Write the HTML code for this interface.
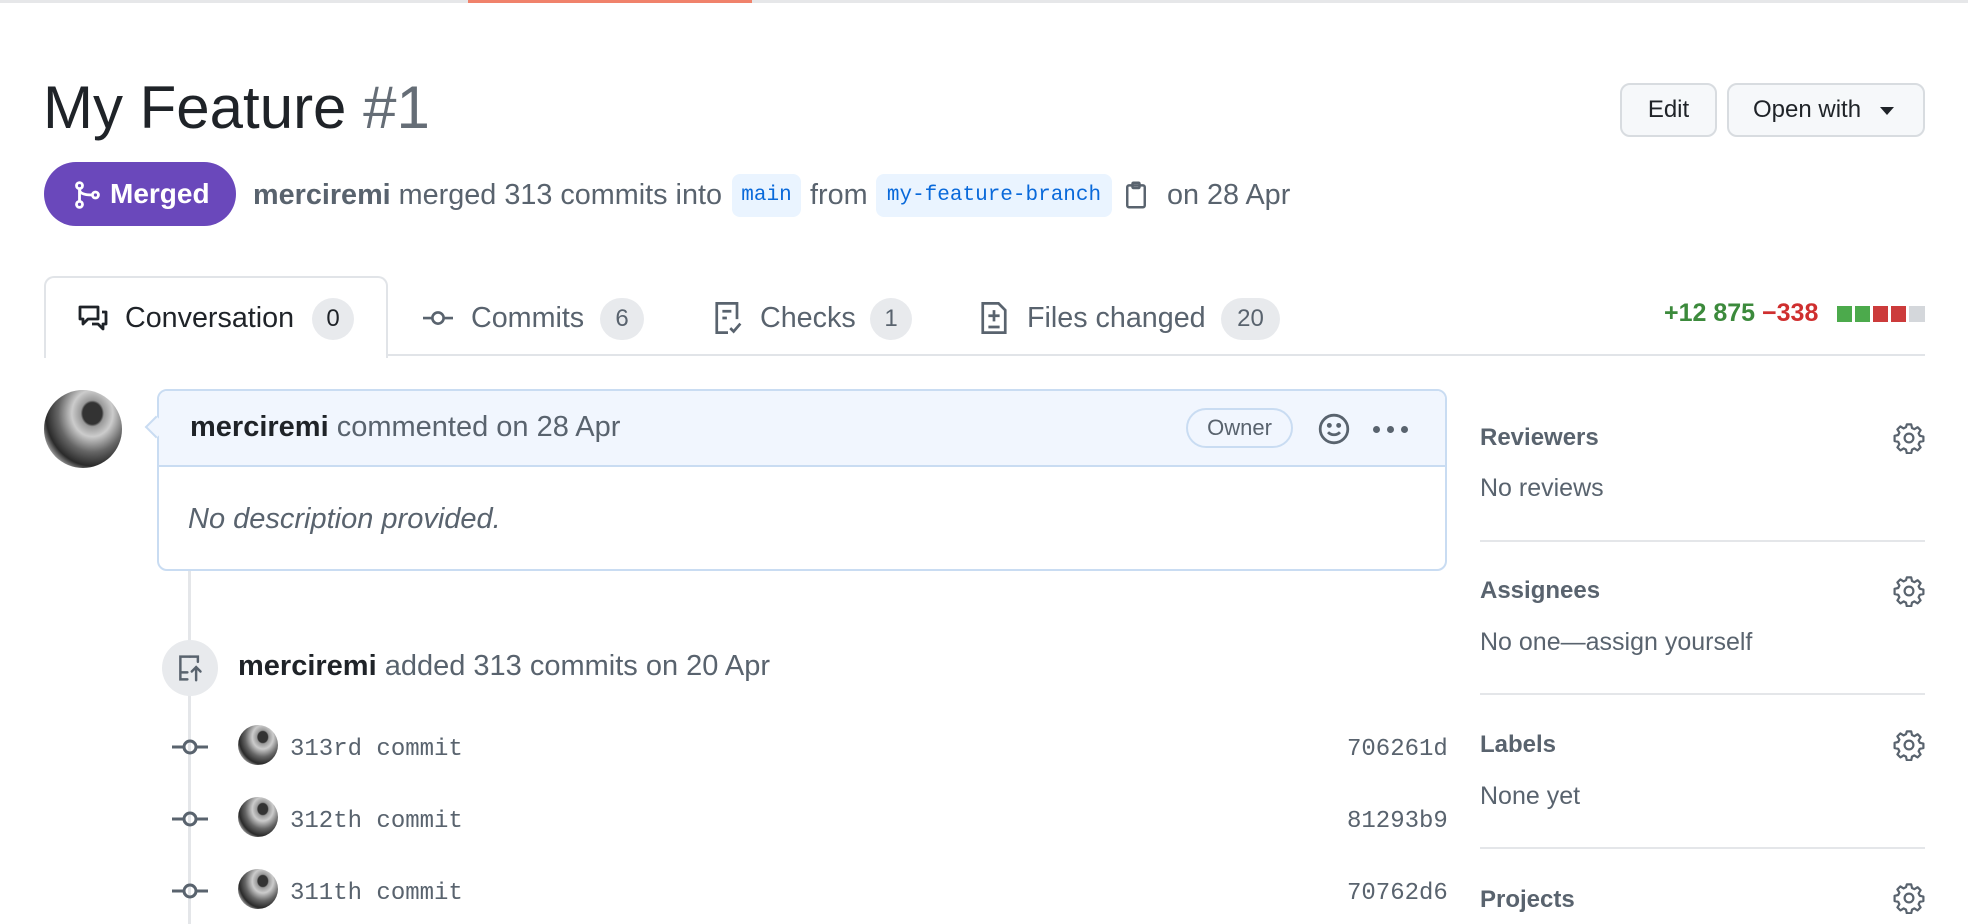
<!DOCTYPE html>
<html><head><meta charset="utf-8">
<style>
*{margin:0;padding:0;box-sizing:border-box}
body{width:1968px;height:924px;overflow:hidden;background:#fff;font-family:"Liberation Sans",sans-serif;color:#1f2328;position:relative}
.a{position:absolute;white-space:nowrap}
.mono{font-family:"Liberation Mono",monospace}
.cnt{position:absolute;background:#e8eaed;border-radius:22px;height:42px;top:298px;font-size:24px;color:#1f2328;text-align:center;line-height:42px}
.tab{position:absolute;top:302px;font-size:28.7px;color:#1f2328;line-height:32px}
.sh{position:absolute;left:1480px;font-size:24px;font-weight:bold;color:#59636e}
.sv{position:absolute;left:1480px;font-size:25px;color:#59636e}
.div{position:absolute;left:1480px;width:445px;height:2px;background:#e4e6e9}
.gear{position:absolute;left:1893px;width:32px;height:32px}
.av{border-radius:50%;background:radial-gradient(ellipse at 62% 30%,#333 0 14%,#999 17%,#ccc 30%,#666 50%,#2a2a2a 68%,#e6e6e6 85%)}
</style></head><body>
<div class="a" style="left:0;top:0;width:1968px;height:3px;background:#e6e7e9"></div>
<div class="a" style="left:468px;top:0;width:284px;height:3px;background:#f0826b"></div>

<div class="a" style="left:43px;top:70px;font-size:60px;line-height:76px;color:#1f2328">My Feature <span style="color:#656d76">#1</span></div>

<div class="a" style="left:1620px;top:83px;width:97px;height:54px;border:2px solid #d8dce0;border-radius:10px;background:#f6f8fa;font-size:24px;line-height:50px;text-align:center">Edit</div>
<div class="a" style="left:1727px;top:83px;width:198px;height:54px;border:2px solid #d8dce0;border-radius:10px;background:#f6f8fa;font-size:24px;line-height:50px;padding-left:24px">Open with <span style="display:inline-block;width:0;height:0;border-left:7px solid transparent;border-right:7px solid transparent;border-top:8px solid #1f2328;margin-left:12px;vertical-align:middle"></span></div>

<div class="a" style="left:44px;top:162px;width:192px;height:64px;border-radius:32px;background:#6a48bb;color:#fff;font-size:28px;font-weight:bold;line-height:64px;padding-left:66px">Merged</div>
<svg class="a" style="left:72px;top:180px" width="30" height="30" viewBox="0 0 16 16" fill="none" stroke="#fff" stroke-width="1.5"><circle cx="4" cy="3" r="1.6"/><circle cx="4" cy="13" r="1.6"/><circle cx="12.5" cy="8" r="1.6"/><path d="M4 4.6v6.8M4 5c0 2 2 3 6.8 3"/></svg>

<div class="a" style="left:253px;top:178px;font-size:28.8px;color:#59636e;line-height:34px"><b>merciremi</b> merged 313 commits into</div>
<div class="a mono" style="left:732px;top:174px;width:69px;height:43px;background:#eaf4ff;border-radius:8px;color:#0969da;font-size:21px;line-height:43px;text-align:center">main</div>
<div class="a" style="left:810px;top:178px;font-size:28.8px;color:#59636e;line-height:34px">from</div>
<div class="a mono" style="left:876px;top:174px;width:236px;height:43px;background:#eaf4ff;border-radius:8px;color:#0969da;font-size:21px;line-height:43px;text-align:center">my-feature-branch</div>
<svg class="a" style="left:1122px;top:180px" width="28" height="30" viewBox="0 0 16 16" fill="none" stroke="#59636e" stroke-width="1.4"><rect x="3" y="2.5" width="10" height="12.5" rx="1"/><rect x="6" y="1" width="4" height="3" rx=".5"/></svg>
<div class="a" style="left:1167px;top:178px;font-size:28.8px;color:#59636e;line-height:34px">on 28 Apr</div>

<!-- tabs -->
<div class="a" style="left:44px;top:276px;width:344px;height:82px;border:2px solid #e1e4e8;border-bottom:none;border-radius:10px 10px 0 0;background:#fff"></div>
<div class="a" style="left:387px;top:354px;width:1538px;height:2px;background:#e1e4e8"></div>
<svg class="a" style="left:76px;top:302px" width="34" height="32" viewBox="0 0 16 16" fill="none" stroke="#1f2328" stroke-width="1.4" stroke-linejoin="round"><path d="M1.5 2.5h9v6h-5l-2.5 2.5v-2.5h-1.5z"/><path d="M12.5 5h2v6h-1.5v2.5l-2.5-2.5h-3"/></svg>
<div class="tab" style="left:125px">Conversation</div>
<div class="cnt" style="left:312px;width:42px">0</div>
<svg class="a" style="left:420px;top:303px" width="36" height="30" viewBox="0 0 18 16" fill="none" stroke="#59636e" stroke-width="1.4"><circle cx="9" cy="8" r="3"/><path d="M1 8h5M12 8h5"/></svg>
<div class="tab" style="left:471px;color:#59636e">Commits</div>
<div class="cnt" style="left:600px;width:44px;color:#59636e">6</div>
<svg class="a" style="left:712px;top:300px" width="32" height="36" viewBox="0 0 14 16" fill="none" stroke="#59636e" stroke-width="1.2"><path d="M7 14.5H2V1.5h9v7"/><path d="M4.5 5h4M4.5 8h2"/><path d="M8 12.5l1.5 1.5 3-3.5"/></svg>
<div class="tab" style="left:760px;color:#59636e">Checks</div>
<div class="cnt" style="left:870px;width:42px;color:#59636e">1</div>
<svg class="a" style="left:978px;top:300px" width="32" height="36" viewBox="0 0 14 16" fill="none" stroke="#59636e" stroke-width="1.2"><path d="M2 1.5h7l3 3v10H2z"/><path d="M7 4.5v5M4.5 7h5M4.5 12h5"/></svg>
<div class="tab" style="left:1027px;color:#59636e">Files changed</div>
<div class="cnt" style="left:1221px;width:59px;color:#59636e">20</div>

<div class="a" style="left:1664px;top:298px;font-size:25px;font-weight:bold;line-height:30px"><span style="color:#3c8a3c">+12 875</span> <span style="color:#cf2f2f">−338</span></div>
<div class="a" style="left:1837px;top:306px;width:15px;height:16px;background:#4caa4c"></div>
<div class="a" style="left:1855px;top:306px;width:15px;height:16px;background:#4caa4c"></div>
<div class="a" style="left:1873px;top:306px;width:15px;height:16px;background:#cc3b3b"></div>
<div class="a" style="left:1891px;top:306px;width:15px;height:16px;background:#cc3b3b"></div>
<div class="a" style="left:1909px;top:306px;width:16px;height:16px;background:#d4d7db"></div>

<!-- comment -->
<div class="a av" style="left:44px;top:390px;width:78px;height:78px"></div>
<div class="a" style="left:188px;top:570px;width:3px;height:354px;background:#e4e6e9"></div>
<div class="a" style="left:157px;top:389px;width:1290px;height:182px;border:2px solid #c9dcf2;border-radius:10px;background:#fff"></div>
<div class="a" style="left:159px;top:391px;width:1286px;height:76px;background:#f1f6fe;border-bottom:2px solid #c9dcf2;border-radius:8px 8px 0 0"></div>
<div class="a" style="left:148px;top:419px;width:16px;height:16px;background:#f1f6fe;border-left:2px solid #c9dcf2;border-bottom:2px solid #c9dcf2;transform:rotate(45deg)"></div>
<div class="a" style="left:190px;top:410px;font-size:29px;color:#59636e;line-height:34px"><b style="color:#1f2328">merciremi</b> commented on 28 Apr</div>
<div class="a" style="left:1186px;top:408px;width:107px;height:40px;border:2px solid #c9dcf2;border-radius:20px;font-size:22px;color:#59636e;text-align:center;line-height:36px">Owner</div>
<svg class="a" style="left:1317px;top:412px" width="34" height="34" viewBox="0 0 16 16" fill="none" stroke="#59636e" stroke-width="1.3"><circle cx="8" cy="8" r="6.5"/><circle cx="5.8" cy="6.3" r=".5" fill="#59636e"/><circle cx="10.2" cy="6.3" r=".5" fill="#59636e"/><path d="M5.2 9.5c1.4 1.6 4.2 1.6 5.6 0"/></svg>
<div class="a" style="left:1373px;top:426px;width:7px;height:7px;border-radius:50%;background:#59636e"></div>
<div class="a" style="left:1387px;top:426px;width:7px;height:7px;border-radius:50%;background:#59636e"></div>
<div class="a" style="left:1401px;top:426px;width:7px;height:7px;border-radius:50%;background:#59636e"></div>
<div class="a" style="left:188px;top:502px;font-size:29px;font-style:italic;color:#59636e;line-height:34px">No description provided.</div>

<!-- push event -->
<div class="a" style="left:162px;top:640px;width:56px;height:56px;border-radius:50%;background:#e8eaed"></div>
<svg class="a" style="left:176px;top:654px" width="28" height="28" viewBox="0 0 16 16" fill="none" stroke="#59636e" stroke-width="1.4" stroke-linecap="round"><path d="M8 1.5H2.5v13h4M2.5 10.5h4"/><path d="M11.5 15V7.5M9 10l2.5-2.5L14 10"/><path d="M8 1.5h4.5v3"/></svg>
<div class="a" style="left:238px;top:649px;font-size:29px;color:#59636e;line-height:34px"><b style="color:#1f2328">merciremi</b> added 313 commits on 20 Apr</div>

<!-- commits -->
<svg class="a" style="left:172px;top:737px" width="36" height="20" viewBox="0 0 18 10" fill="none" stroke="#59636e" stroke-width="1.5"><circle cx="9" cy="5" r="3"/><path d="M0 5h6M12 5h6"/></svg>
<div class="a av" style="left:238px;top:725px;width:40px;height:40px"></div>
<div class="a mono" style="left:290px;top:735px;font-size:24px;color:#59636e;line-height:30px">313rd commit</div>
<div class="a mono" style="left:1347px;top:735px;font-size:24px;color:#59636e;line-height:30px">706261d</div>

<svg class="a" style="left:172px;top:809px" width="36" height="20" viewBox="0 0 18 10" fill="none" stroke="#59636e" stroke-width="1.5"><circle cx="9" cy="5" r="3"/><path d="M0 5h6M12 5h6"/></svg>
<div class="a av" style="left:238px;top:797px;width:40px;height:40px"></div>
<div class="a mono" style="left:290px;top:807px;font-size:24px;color:#59636e;line-height:30px">312th commit</div>
<div class="a mono" style="left:1347px;top:807px;font-size:24px;color:#59636e;line-height:30px">81293b9</div>

<svg class="a" style="left:172px;top:881px" width="36" height="20" viewBox="0 0 18 10" fill="none" stroke="#59636e" stroke-width="1.5"><circle cx="9" cy="5" r="3"/><path d="M0 5h6M12 5h6"/></svg>
<div class="a av" style="left:238px;top:869px;width:40px;height:40px"></div>
<div class="a mono" style="left:290px;top:879px;font-size:24px;color:#59636e;line-height:30px">311th commit</div>
<div class="a mono" style="left:1347px;top:879px;font-size:24px;color:#59636e;line-height:30px">70762d6</div>

<!-- sidebar -->
<div class="sh" style="top:424px">Reviewers</div>
<div class="sv" style="top:474px">No reviews</div>
<div class="div" style="top:540px"></div>
<div class="sh" style="top:577px">Assignees</div>
<div class="sv" style="top:628px">No one—assign yourself</div>
<div class="div" style="top:693px"></div>
<div class="sh" style="top:731px">Labels</div>
<div class="sv" style="top:782px">None yet</div>
<div class="div" style="top:847px"></div>
<div class="sh" style="top:886px">Projects</div>

<svg width="0" height="0" style="position:absolute"><defs><g id="g"><path d="M6.9 1.2h2.2l.4 1.8 1.2.6 1.6-1 1.5 1.5-1 1.6.6 1.2 1.8.4v2.2l-1.8.4-.6 1.2 1 1.6-1.5 1.5-1.6-1-1.2.6-.4 1.8H6.9l-.4-1.8-1.2-.6-1.6 1-1.5-1.5 1-1.6-.6-1.2-1.8-.4V6.9l1.8-.4.6-1.2-1-1.6 1.5-1.5 1.6 1 1.2-.6z" fill="none" stroke="#59636e" stroke-width="1.1" stroke-linejoin="round"/><circle cx="8" cy="8" r="2.2" fill="none" stroke="#59636e" stroke-width="1.1"/></g></defs></svg>
<svg class="gear" style="top:422px" viewBox="0 0 16 16"><use href="#g"/></svg>
<svg class="gear" style="top:575px" viewBox="0 0 16 16"><use href="#g"/></svg>
<svg class="gear" style="top:729px" viewBox="0 0 16 16"><use href="#g"/></svg>
<svg class="gear" style="top:882px" viewBox="0 0 16 16"><use href="#g"/></svg>
</body></html>
